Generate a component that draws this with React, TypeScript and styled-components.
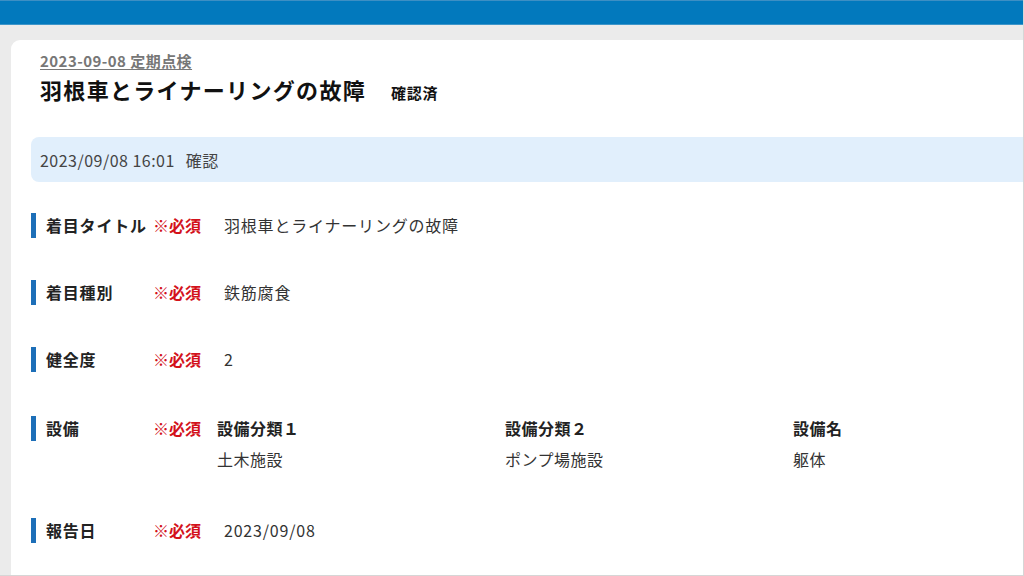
import styled, { createGlobalStyle } from 'styled-components';

const GlobalStyle = createGlobalStyle`
  html, body {
    margin: 0;
    padding: 0;
    background: #ebebeb;
  }
  body {
    font-family: "Noto Sans CJK JP", "Noto Sans", sans-serif;
    color: #222;
    overflow: hidden;
  }
`;

const Page = styled.div`
  width: 1024px;
  height: 576px;
  display: flex;
  flex-direction: column;
  background: #ebebeb;
  box-sizing: border-box;
  border-right: 1px solid #d6d6d6;
  border-bottom: 1px solid #d6d6d6;
`;

const TopBar = styled.header`
  height: 25px;
  flex-shrink: 0;
  background: #0279bd;
  border-top: 1px solid #3d8fc4;
  border-bottom: 1px solid #3d95c9;
  box-sizing: border-box;
`;

const Body = styled.div`
  flex: 1;
  display: flex;
  padding: 15px 0 0 11px;
  min-height: 0;
`;

const Card = styled.main`
  flex: 1;
  background: #fff;
  border-radius: 9px 0 0 0;
  padding: 8px 0 0 20px;
  overflow: hidden;
`;

const Heading = styled.div`
  padding-left: 9px;
`;

const Crumb = styled.a`
  display: inline-block;
  font-size: 15px;
  line-height: 20px;
  font-weight: 700;
  color: #777;
  letter-spacing: 0.03em;
  text-decoration: underline;
  text-underline-offset: 2px;
`;

const TitleRow = styled.div`
  display: flex;
  align-items: baseline;
  gap: 25px;
  margin-top: 1px;
`;

const Title = styled.h1`
  margin: 0;
  font-size: 22px;
  line-height: 32px;
  font-weight: 700;
  letter-spacing: 0.06em;
  color: #111;
`;

const Status = styled.span`
  font-size: 15px;
  font-weight: 700;
  letter-spacing: 0.05em;
  color: #111;
`;

const Banner = styled.div`
  margin-top: 32px;
  height: 45px;
  display: flex;
  align-items: center;
  gap: 11px;
  padding-left: 9px;
  background: #e1effc;
  border-radius: 8px 0 0 8px;
  font-size: 16px;
  letter-spacing: 0.03em;
  color: #444;
`;

const FieldList = styled.div`
  display: flex;
  flex-direction: column;
  gap: 42px;
  margin-top: 31px;
`;

const Field = styled.div<{ $spaced?: boolean }>`
  display: flex;
  align-items: flex-start;
  margin: ${({ $spaced }) => ($spaced ? '2px 0 4px' : '0')};
`;

const Label = styled.div`
  display: flex;
  align-items: center;
  gap: 10px;
  width: 122px;
  flex-shrink: 0;
  font-size: 16px;
  line-height: 25px;
  font-weight: 700;
  letter-spacing: 0.05em;
  color: #222;

  &::before {
    content: '';
    width: 5px;
    height: 25px;
    background: #1d6fb8;
  }
`;

const Required = styled.span`
  width: 64px;
  flex-shrink: 0;
  font-size: 16px;
  line-height: 25px;
  font-weight: 700;
  color: #d3121b;
`;

const Value = styled.span`
  padding-left: 7px;
  font-size: 16px;
  line-height: 25px;
  letter-spacing: 0.05em;
  color: #333;
`;

const SubGrid = styled.div`
  display: grid;
  grid-template-columns: repeat(3, 288px);
  row-gap: 6px;
`;

const SubHead = styled.span`
  font-size: 16px;
  line-height: 25px;
  font-weight: 700;
  letter-spacing: 0.03em;
  color: #222;
`;

const SubValue = styled.span`
  font-size: 16px;
  line-height: 25px;
  letter-spacing: 0.03em;
  color: #333;
`;

const equipment = [
  { head: '設備分類１', value: '土木施設' },
  { head: '設備分類２', value: 'ポンプ場施設' },
  { head: '設備名', value: '躯体' },
];

const App = () => (
  <>
    <GlobalStyle />
    <Page>
      <TopBar />
      <Body>
        <Card>
          <Heading>
            <Crumb>2023-09-08 定期点検</Crumb>
            <TitleRow>
              <Title>羽根車とライナーリングの故障</Title>
              <Status>確認済</Status>
            </TitleRow>
          </Heading>

          <Banner>
            <span>2023/09/08 16:01</span>
            <span>確認</span>
          </Banner>

          <FieldList>
            <Field>
              <Label>着目タイトル</Label>
              <Required>※必須</Required>
              <Value>羽根車とライナーリングの故障</Value>
            </Field>
            <Field>
              <Label>着目種別</Label>
              <Required>※必須</Required>
              <Value>鉄筋腐食</Value>
            </Field>
            <Field>
              <Label>健全度</Label>
              <Required>※必須</Required>
              <Value>2</Value>
            </Field>
            <Field $spaced>
              <Label>設備</Label>
              <Required>※必須</Required>
              <SubGrid>
                {equipment.map((e) => (
                  <SubHead key={e.head}>{e.head}</SubHead>
                ))}
                {equipment.map((e) => (
                  <SubValue key={e.value}>{e.value}</SubValue>
                ))}
              </SubGrid>
            </Field>
            <Field>
              <Label>報告日</Label>
              <Required>※必須</Required>
              <Value>2023/09/08</Value>
            </Field>
          </FieldList>
        </Card>
      </Body>
    </Page>
  </>
);

export default App;
